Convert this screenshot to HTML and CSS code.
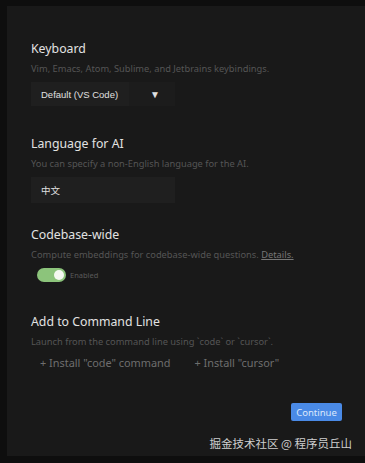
FILE: index.html
```html
<!DOCTYPE html>
<html>
<head>
  <title>Settings</title>
  <link rel="stylesheet" href="styles.css">
</head>
<body>
  <div class="panel">
    <div class="setting setting-keyboard">
      <h2>Keyboard</h2>
      <p class="desc">Vim, Emacs, Atom, Sublime, and Jetbrains keybindings.</p>
      <div class="select">
        <span class="select-value">Default (VS Code)</span>
        <span class="select-arrow">&#9660;</span>
      </div>
    </div>
    <div class="setting setting-language">
      <h2>Language for AI</h2>
      <p class="desc">You can specify a non-English language for the AI.</p>
      <div class="text-input">中文</div>
    </div>
    <div class="setting setting-wide">
      <h2>Codebase-wide</h2>
      <p class="desc">Compute embeddings for codebase-wide questions. <u>Details.</u></p>
      <div class="toggle-row">
        <span class="toggle"><span class="knob"></span></span>
        <span class="toggle-label">Enabled</span>
      </div>
    </div>
    <div class="setting setting-last">
      <h2>Add to Command Line</h2>
      <p class="desc">Launch from the command line using `code` or `cursor`.</p>
      <div class="install-row">
        <span class="install">+ Install "code" command</span>
        <span class="install">+ Install "cursor"</span>
      </div>
    </div>
    <div class="footer">
      <button class="continue">Continue</button>
    </div>
    <div class="watermark">掘金技术社区 @ 程序员丘山</div>
  </div>
</body>
</html>
```

FILE: styles.css
```css
body {
  margin: 0;
  background-color: #0e0e0e;
  font-family: "Noto Sans", "Noto Sans CJK SC", sans-serif;
  color: #d6d6d6;
  padding: 6px 0 0 7px;
  height: 463px;
  box-sizing: border-box;
  overflow: hidden;
}
.panel {
  background-color: #191919;
  height: 450px;
  box-sizing: border-box;
  padding: 33px 0 0 24px;
  position: relative;
}
.setting-keyboard {
  margin-bottom: 28px;
}
.setting-language {
  margin-bottom: 22px;
}
.setting-wide {
  margin-bottom: 30px;
}
h2 {
  font-size: 12.3px;
  font-weight: 400;
  margin: 0;
  line-height: 20px;
  color: #e2e2e2;
}
.desc {
  font-size: 9.3px;
  color: #555;
  margin: 3px 0 6px 0;
  line-height: 14px;
  white-space: nowrap;
}
.desc u {
  color: #767676;
}
.select {
  display: flex;
  width: 144px;
  height: 24px;
  margin-top: 4px;
  background-color: #1f1f1f;
  font-family: "Liberation Sans", Arial, sans-serif;
  font-size: 9.5px;
  color: #e0e0e0;
}
.select-value {
  flex: 1;
  display: flex;
  align-items: center;
  padding-left: 10px;
}
.select-arrow {
  width: 46px;
  background-color: #1c1c1c;
  display: flex;
  align-items: center;
  justify-content: center;
  font-size: 10px;
  padding-left: 6px;
  box-sizing: border-box;
}
.text-input {
  width: 144px;
  height: 26px;
  margin-top: 4px;
  background-color: #1f1f1f;
  box-sizing: border-box;
  padding-left: 10px;
  display: flex;
  align-items: center;
  font-size: 9.5px;
  color: #e0e0e0;
}
.toggle-row {
  display: flex;
  align-items: center;
  margin-left: 6px;
  margin-top: 4px;
}
.toggle {
  width: 29px;
  height: 14px;
  border-radius: 7px;
  background-color: #8cc47b;
  position: relative;
}
.knob {
  position: absolute;
  right: 2px;
  top: 2px;
  width: 10px;
  height: 10px;
  border-radius: 50%;
  background-color: #f4f8f0;
}
.toggle-label {
  font-size: 7.5px;
  color: #595959;
  margin-left: 4px;
}
.install-row {
  display: flex;
  gap: 24px;
  padding-left: 9px;
  line-height: 15px;
}
.install {
  font-size: 10.9px;
  color: #6e6e6e;
}
.footer {
  display: flex;
  justify-content: flex-end;
  padding-right: 23px;
  margin-top: 33px;
}
.continue {
  background-color: #4a8ae6;
  color: #dce8fb;
  border: none;
  border-radius: 2px;
  font-family: "Noto Sans", sans-serif;
  font-size: 9.5px;
  width: 51px;
  height: 18px;
  padding: 0;
}
.watermark {
  position: absolute;
  right: 13px;
  bottom: 5px;
  font-size: 11.5px;
  color: #cfcfcf;
  font-family: "Noto Sans CJK SC", sans-serif;
}
```
